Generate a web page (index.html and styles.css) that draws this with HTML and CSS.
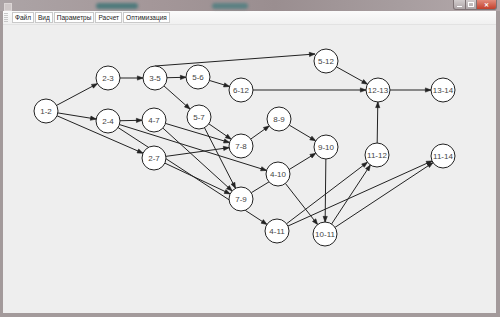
FILE: index.html
```html
<!DOCTYPE html>
<html lang="ru">
<head>
    <meta charset="UTF-8">
    <title>Сетевой график</title>
    <link rel="stylesheet" href="styles.css">
</head>
<body>
    <div class="window">
        <div class="titlebar">
            <div class="app-icon"></div>
            <div class="blur blur-a"></div>
            <div class="blur blur-b"></div>
            <div class="controls">
                <span class="ctl ctl-min"><i></i></span>
                <span class="ctl ctl-max"><i></i></span>
                <span class="ctl ctl-close">✕</span>
            </div>
        </div>
        <div class="frame">
            <div class="menubar">
                <span class="grip"></span>
                <span class="menu-item">Файл</span>
                <span class="menu-item">Вид</span>
                <span class="menu-item">Параметры</span>
                <span class="menu-item">Расчет</span>
                <span class="menu-item">Оптимизация</span>
            </div>
            <div class="canvas">
                <svg id="graph" width="493" height="288" viewBox="3 25 493 288"></svg>
            </div>
        </div>
    </div>
    <script>
    "use strict";

        var nodes = {
            "1-2": [46, 111], "2-3": [108, 78], "3-5": [155, 78], "5-6": [198, 77],
            "6-12": [241, 90], "5-12": [326, 61], "12-13": [378, 90], "13-14": [443, 90],
            "2-4": [108, 121], "4-7": [154, 120], "5-7": [199, 117], "7-8": [241, 146],
            "8-9": [279, 119], "9-10": [326, 147], "2-7": [154, 158], "4-10": [278, 174],
            "11-12": [377, 155], "11-14": [443, 156], "7-9": [241, 199], "4-11": [277, 231],
            "10-11": [325, 234]
        };
        // edges routed around other nodes
        var routed = {
            "3-5>5-12": [[155, 66], [315, 54]]
        };
        var R = 12;
        var svg = document.getElementById("graph");
        var NS = "http://www.w3.org/2000/svg";

        function el(name, attrs) {
            var e = document.createElementNS(NS, name);
            for (var k in attrs) {
                e.setAttribute(k, attrs[k]);
            }
            svg.appendChild(e);
            return e;
        }

        function arrow(x1, y1, x2, y2) {
            el("line", { x1: x1, y1: y1, x2: x2, y2: y2, "class": "edge" });
            var ang = Math.atan2(y2 - y1, x2 - x1), s = 0.36, h = 6;
            var p1 = [x2 - h * Math.cos(ang - s), y2 - h * Math.sin(ang - s)];
            var p2 = [x2 - h * Math.cos(ang + s), y2 - h * Math.sin(ang + s)];
            el("polygon", { points: p1.join(",") + " " + x2 + "," + y2 + " " + p2.join(","), "class": "head" });
        }

        // arrow from a-b to c-d whenever b == c
        var names = Object.keys(nodes);
        names.forEach(function (from) {
            names.forEach(function (to) {
                if (from.split("-")[1] !== to.split("-")[0]) return;
                var r = routed[from + ">" + to];
                if (r) {
                    arrow(r[0][0], r[0][1], r[1][0], r[1][1]);
                    return;
                }
                var a = nodes[from], b = nodes[to];
                var dx = b[0] - a[0], dy = b[1] - a[1];
                var len = Math.sqrt(dx * dx + dy * dy);
                var ux = dx / len, uy = dy / len;
                arrow(a[0] + ux * R, a[1] + uy * R, b[0] - ux * R, b[1] - uy * R);
            });
        });

        names.forEach(function (n) {
            var p = nodes[n];
            el("circle", { cx: p[0], cy: p[1], r: R, "class": "node" });
            var t = el("text", { x: p[0], y: p[1] + 3, "class": "label" });
            t.textContent = n;
        });
    </script>
</body>
</html>
```

FILE: styles.css
```css
html, body {
    margin: 0;
    padding: 0;
}

body {
    width: 500px;
    height: 317px;
    overflow: hidden;
    font-family: "Liberation Sans", Arial, sans-serif;
}

.window {
    width: 500px;
    height: 317px;
    display: flex;
    flex-direction: column;
    background: #a39a9b;
}

.titlebar {
    height: 12px;
    position: relative;
    display: flex;
    align-items: flex-start;
    background: linear-gradient(90deg, #aca4a6 0%, #a49799 30%, #9a8e90 55%, #a79d9f 80%, #b4a9ab 100%);
}

.app-icon {
    width: 6px;
    height: 6px;
    margin: 3px 0 0 4px;
    border: 1px solid #dcd6d6;
    background: #cfc8c8;
}

.blur {
    position: absolute;
    top: 3px;
    height: 6px;
    border-radius: 3px;
    filter: blur(1.5px);
}

.blur-a {
    left: 96px;
    width: 42px;
    background: #4f7a7c;
}

.blur-b {
    left: 212px;
    width: 36px;
    background: #5b8183;
}

.controls {
    margin-left: auto;
    margin-right: 3px;
    display: flex;
    height: 10px;
}

.ctl {
    height: 9px;
    display: flex;
    align-items: center;
    justify-content: center;
    border: 1px solid #7e7274;
    border-top: none;
    background: linear-gradient(#d2cccd, #aea5a7);
}

.ctl-min {
    width: 11px;
    border-radius: 0 0 0 3px;
}

.ctl-min i {
    width: 5px;
    height: 1px;
    margin-top: 4px;
    background: #fff;
}

.ctl-max {
    width: 10px;
    border-left: none;
}

.ctl-max i {
    width: 4px;
    height: 3px;
    border: 1px solid #fff;
}

.ctl-close {
    width: 19px;
    border-left: none;
    border-radius: 0 0 3px 0;
    background: linear-gradient(#e28b7b, #c3402c);
    color: #fff;
    font-size: 6px;
    font-weight: bold;
}

.frame {
    flex: 1;
    display: flex;
    flex-direction: column;
    margin: 0 4px 4px 3px;
    background: #eeeeee;
}

.menubar {
    height: 13px;
    display: flex;
    align-items: center;
    gap: 1px;
    background: linear-gradient(#fbfbfb, #f0f0f0);
    border-bottom: 1px solid #e2e2e2;
}

.grip {
    width: 4px;
    height: 9px;
    margin: 0 3px 0 1px;
    background: repeating-linear-gradient(#c8c8c8 0 1px, transparent 1px 2px);
}

.menu-item {
    font-size: 6.5px;
    line-height: 9px;
    padding: 0 2px;
    color: #222;
    background: #fff;
    border: 1px solid #c9c9c9;
}

.canvas {
    flex: 1;
}

#graph {
    display: block;
}

.edge {
    stroke: #222;
    stroke-width: 1;
}

.head {
    fill: #222;
    stroke: #222;
    stroke-width: 0.6;
}

.node {
    fill: #fff;
    stroke: #222;
    stroke-width: 1;
}

.label {
    font-family: "Liberation Sans", Arial, sans-serif;
    font-size: 8px;
    fill: #444;
    text-anchor: middle;
}
```
